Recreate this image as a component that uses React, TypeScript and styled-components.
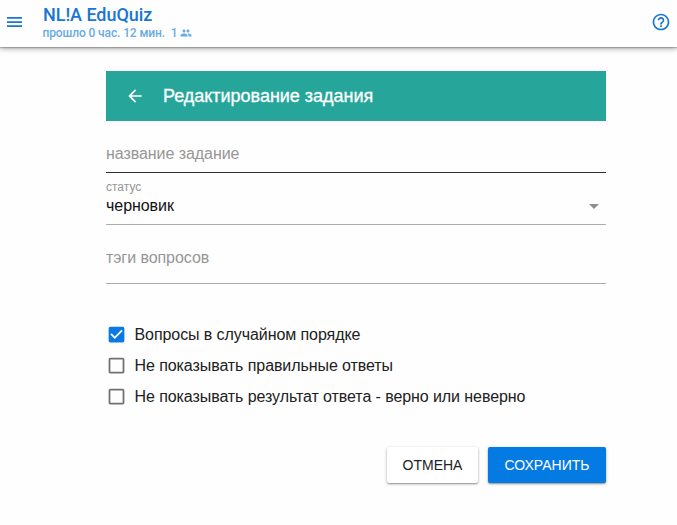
import React from 'react';
import styled, { createGlobalStyle } from 'styled-components';
import {
  MdArrowBack,
  MdHelpOutline,
  MdPeople,
  MdCheckBox,
  MdCheckBoxOutlineBlank,
  MdArrowDropDown,
} from 'react-icons/md';

const GlobalStyle = createGlobalStyle`
  * { box-sizing: border-box; }
  body {
    margin: 0;
    background: #fefefe;
    color: #212121;
    font-family: "Liberation Sans", Arial, sans-serif;
    font-size: 16px;
    overflow: hidden;
  }
`;

const Page = styled.div`
  height: 525px;
`;

const AppBar = styled.header`
  height: 47px;
  display: flex;
  align-items: flex-start;
  padding: 0 6px 0 7px;
  background: #fefefe;
  color: #1976d2;
  box-shadow: 0 1px 1px rgba(0, 0, 0, 0.2), 0 2px 5px rgba(0, 0, 0, 0.32);
`;

const BarButton = styled.button<{ $top: number }>`
  display: flex;
  margin: ${(p) => p.$top}px 0 0;
  padding: 0;
  border: 0;
  background: none;
  color: inherit;
`;

const Brand = styled.div`
  flex: 1;
  margin: 4px 0 0 21px;
  font-family: Roboto, sans-serif;
`;

const BrandName = styled.div`
  font-size: 18px;
  line-height: 22px;
  font-weight: 500;
  letter-spacing: -0.05px;
`;

const BrandStatus = styled.div`
  display: flex;
  align-items: center;
  margin-left: -0.5px;
  font-size: 12px;
  line-height: 14px;
  font-weight: 500;
  letter-spacing: -0.12px;
  white-space: pre;
  color: #69abe3;
`;

const Form = styled.main`
  width: 500px;
  margin: 24px 0 0 106px;
`;

const TitleBar = styled.div`
  display: flex;
  align-items: center;
  gap: 18px;
  height: 50px;
  padding-left: 19px;
  background: #26a69a;
  color: #fff;
`;

const Title = styled.h1`
  margin: 0;
  font-size: 18px;
  font-weight: 400;
  letter-spacing: -0.02px;
  -webkit-text-stroke: 0.3px #fff;
`;

const Field = styled.div<{ $height: number; $pad: number; $line: string }>`
  height: ${(p) => p.$height}px;
  padding-top: ${(p) => p.$pad}px;
  border-bottom: 1px solid ${(p) => p.$line};
`;

const Placeholder = styled.div`
  line-height: 20px;
  letter-spacing: -0.06px;
  color: #969696;
`;

const FieldLabel = styled.div`
  font-size: 12px;
  line-height: 14px;
  color: #969696;
`;

const SelectValue = styled.div`
  display: flex;
  justify-content: space-between;
  align-items: center;
  height: 24px;
  letter-spacing: -0.05px;
  color: #111;

  svg { color: #8e8e8e; }
`;

const Options = styled.div`
  display: flex;
  flex-direction: column;
  margin-top: 35px;
`;

const Option = styled.label`
  display: flex;
  align-items: center;
  gap: 8px;
  height: 31px;
  letter-spacing: -0.08px;
`;

const OptionIcon = styled.span<{ $checked: boolean }>`
  display: flex;
  margin-left: -0.5px;
  color: ${(p) => (p.$checked ? '#0a7ae2' : '#707070')};
`;

const Actions = styled.div`
  display: flex;
  justify-content: flex-end;
  gap: 10px;
  margin-top: 35px;
`;

const ActionButton = styled.button<{ $primary?: boolean }>`
  width: ${(p) => (p.$primary ? 118 : 91)}px;
  height: 36px;
  padding: 0;
  border: 0;
  border-radius: 2px;
  background: ${(p) => (p.$primary ? '#047ae3' : '#fff')};
  color: ${(p) => (p.$primary ? '#fff' : '#212121')};
  font: 14px "Liberation Sans", Arial, sans-serif;
  box-shadow: 0 1px 3px rgba(0, 0, 0, 0.32), 0 1px 1px rgba(0, 0, 0, 0.18);
`;

const MenuIcon = () => (
  <svg width="15" height="10" viewBox="0 0 15 10" fill="currentColor">
    <path d="M0 0h15v1.7H0zM0 4.2h15v1.7H0zM0 8.3h15V10H0z" />
  </svg>
);

const options = [
  { label: 'Вопросы в случайном порядке', checked: true },
  { label: 'Не показывать правильные ответы', checked: false },
  { label: 'Не показывать результат ответа - верно или неверно', checked: false },
];

export default function App() {
  return (
    <Page>
      <GlobalStyle />
      <AppBar>
        <BarButton $top={17} aria-label="Меню"><MenuIcon /></BarButton>
        <Brand>
          <BrandName>NL!A EduQuiz</BrandName>
          <BrandStatus>прошло 0 час. 12 мин.  1 <MdPeople size={12} /></BrandStatus>
        </Brand>
        <BarButton $top={12} aria-label="Помощь"><MdHelpOutline size={20} /></BarButton>
      </AppBar>
      <Form>
        <TitleBar>
          <MdArrowBack size={20} />
          <Title>Редактирование задания</Title>
        </TitleBar>
        <Field $height={52} $pad={23} $line="#303030">
          <Placeholder>название задание</Placeholder>
        </Field>
        <Field $height={52} $pad={7} $line="#adadad">
          <FieldLabel>статус</FieldLabel>
          <SelectValue>черновик<MdArrowDropDown size={24} /></SelectValue>
        </Field>
        <Field $height={59} $pad={23} $line="#adadad">
          <Placeholder>тэги вопросов</Placeholder>
        </Field>
        <Options>
          {options.map(({ label, checked }) => (
            <Option key={label}>
              <OptionIcon $checked={checked}>
                {checked ? <MdCheckBox size={21} /> : <MdCheckBoxOutlineBlank size={21} />}
              </OptionIcon>
              {label}
            </Option>
          ))}
        </Options>
        <Actions>
          <ActionButton>ОТМЕНА</ActionButton>
          <ActionButton $primary>СОХРАНИТЬ</ActionButton>
        </Actions>
      </Form>
    </Page>
  );
}
